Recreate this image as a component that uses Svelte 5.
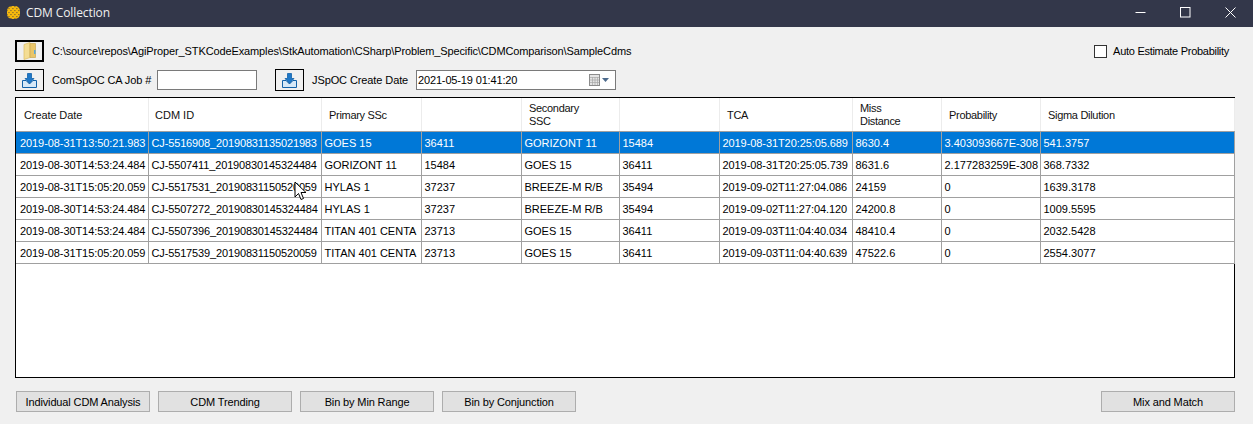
<script>
  const cols = [133, 173, 100, 100, 98, 100, 133, 89, 99, 194];
  const gridCols = cols.map((c) => c + 'px').join(' ');
  const headers = ['Create Date', 'CDM ID', 'Primary SSc', '', 'Secondary SSC', '', 'TCA', 'Miss Distance', 'Probability', 'Sigma Dilution'];
  const rows = [
    ['2019-08-31T13:50:21.983', 'CJ-5516908_20190831135021983', 'GOES 15', '36411', 'GORIZONT 11', '15484', '2019-08-31T20:25:05.689', '8630.4', '3.403093667E-308', '541.3757'],
    ['2019-08-30T14:53:24.484', 'CJ-5507411_20190830145324484', 'GORIZONT 11', '15484', 'GOES 15', '36411', '2019-08-31T20:25:05.739', '8631.6', '2.177283259E-308', '368.7332'],
    ['2019-08-31T15:05:20.059', 'CJ-5517531_20190831150520059', 'HYLAS 1', '37237', 'BREEZE-M R/B', '35494', '2019-09-02T11:27:04.086', '24159', '0', '1639.3178'],
    ['2019-08-30T14:53:24.484', 'CJ-5507272_20190830145324484', 'HYLAS 1', '37237', 'BREEZE-M R/B', '35494', '2019-09-02T11:27:04.120', '24200.8', '0', '1009.5595'],
    ['2019-08-30T14:53:24.484', 'CJ-5507396_20190830145324484', 'TITAN 401 CENTA', '23713', 'GOES 15', '36411', '2019-09-03T11:04:40.034', '48410.4', '0', '2032.5428'],
    ['2019-08-31T15:05:20.059', 'CJ-5517539_20190831150520059', 'TITAN 401 CENTA', '23713', 'GOES 15', '36411', '2019-09-03T11:04:40.639', '47522.6', '0', '2554.3077']
  ];
  const actions = ['Individual CDM Analysis', 'CDM Trending', 'Bin by Min Range', 'Bin by Conjunction'];
</script>

{#snippet download()}
  <svg width="15" height="15" viewBox="0 0 15 15">
    <path d="M.5 7.5h3.5l3.5 3.5 3.5-3.5h3.5v7h-14z" fill="#d6e8f7" stroke="#1261a8" stroke-width="1"/>
    <path d="M5.5 .5h4v5h2.5l-4.5 5-4.5-5h2.5z" fill="#1f78c8" stroke="#1261a8" stroke-width=".8"/>
  </svg>
{/snippet}

<div class="window">
  <header class="titlebar">
    <div class="title">
      <svg class="logo" width="13" height="13" viewBox="0 0 13 13">
        <defs>
          <pattern id="chk" width="2.8" height="2.8" patternUnits="userSpaceOnUse" patternTransform="rotate(45)">
            <rect width="2.8" height="2.8" fill="#f7b90c"/>
            <rect width="1" height="1" fill="#33374a"/>
          </pattern>
        </defs>
        <rect x="0" y="0" width="13" height="13" rx="5" fill="url(#chk)"/>
      </svg>
      <span>CDM Collection</span>
    </div>
    <div class="winctl">
      <svg width="11" height="11" viewBox="0 0 11 11"><path d="M.5 5.5h10" stroke="#fff" stroke-width="1"/></svg>
      <svg width="11" height="11" viewBox="0 0 11 11"><rect x=".5" y=".5" width="9.5" height="9.5" fill="none" stroke="#fff" stroke-width="1"/></svg>
      <svg width="11" height="11" viewBox="0 0 11 11"><path d="M.5 .5l10 10M10.500 .5L.5 10.500" stroke="#fff" stroke-width="1"/></svg>
    </div>
  </header>

  <main class="content">
    <div class="row first">
      <button class="icon-btn folder" aria-label="Browse">
        <svg width="14" height="18" viewBox="0 0 14 18">
          <path d="M1 2.500l6-2v15l-6 2z" fill="#f4dd94" stroke="#dcbc62" stroke-width=".7"/>
          <path d="M7 1.500h5.500v14H7z" fill="#e9c569" stroke="#c9a850" stroke-width=".7"/>
          <rect x="11" y="8" width="1.500" height="4" fill="#5aa7dc"/>
        </svg>
      </button>
      <span class="path">C:\source\repos\AgiProper_STKCodeExamples\StkAutomation\CSharp\Problem_Specific\CDMComparison\SampleCdms</span>
      <label class="auto"><span class="check"></span><span>Auto Estimate Probability</span></label>
    </div>

    <div class="row second">
      <button class="icon-btn" aria-label="Load ComSpOC">{@render download()}</button>
      <span class="lbl job">ComSpOC CA Job #</span>
      <div class="input"></div>
      <button class="icon-btn b2" aria-label="Load JSpOC">{@render download()}</button>
      <span class="lbl date">JSpOC Create Date</span>
      <div class="picker">
        <span>2021-05-19 01:41:20</span>
        <svg width="20" height="12" viewBox="0 0 20 12">
          <rect x=".5" y=".5" width="10" height="11" fill="#e4e4e4" stroke="#8c8c8c"/>
          <path d="M1 3.500h9M1 6h9M1 8.500h9M3.500 3v8M6 3v8M8.500 3v8" stroke="#a8a8a8" stroke-width=".7"/>
          <path d="M13 4h7l-3.500 4z" fill="#4c6a8c"/>
        </svg>
      </div>
    </div>

    <div class="table">
      <div class="grid head" style="grid-template-columns:{gridCols}">
        {#each headers as h}
          <div class="hcell"><span>{h}</span></div>
        {/each}
      </div>
      {#each rows as r, i}
        <div class="grid data" class:selected={i === 0} style="grid-template-columns:{gridCols}">
          {#each r as c}
            <div class="cell">{c}</div>
          {/each}
        </div>
      {/each}
      <svg class="cursor" width="13" height="20" viewBox="0 0 13 20">
        <path d="M1 1v15l3.500-3.500 2.500 6 2.500-1-2.500-6h5z" fill="#fff" stroke="#000" stroke-width="1"/>
      </svg>
    </div>

    <div class="actions">
      {#each actions as a}
        <button class="action">{a}</button>
      {/each}
      <button class="action last">Mix and Match</button>
    </div>
  </main>
</div>

<style>
  :global(body) {
    margin: 0;
    background: #f0f0f0;
  }
  .window {
    width: 1253px;
    height: 424px;
    overflow: hidden;
    background: #f0f0f0;
    font-family: "Liberation Sans", Arial, sans-serif;
    font-size: 11px;
    color: #000;
  }
  .titlebar {
    box-sizing: border-box;
    height: 27px;
    padding-bottom: 3px;
    background: #33374a;
    display: flex;
    align-items: center;
    justify-content: space-between;
    color: #fff;
  }
  .title {
    display: flex;
    align-items: center;
    padding-left: 7px;
    gap: 6px;
    font-family: "Open Sans", sans-serif;
    font-size: 12px;
    letter-spacing: -0.1px;
    color: #f0f0f0;
  }
  .winctl {
    display: flex;
    gap: 34px;
    padding-right: 17px;
  }
  .winctl svg { display: block; }
  .content {
    padding: 13px 18px 0 15px;
  }
  .row {
    display: flex;
    align-items: center;
  }
  .first { height: 22px; }
  .second {
    height: 22px;
    margin-top: 7px;
  }
  .icon-btn {
    box-sizing: border-box;
    width: 29px;
    height: 22px;
    padding: 0;
    background: #f0f0f0;
    border: 1px solid #000;
    display: flex;
    align-items: center;
    justify-content: center;
    flex: none;
  }
  .folder { border-width: 2px; }
  .path {
    margin-left: 8px;
    flex: 1;
    letter-spacing: -0.12px;
  }
  .auto {
    display: flex;
    align-items: center;
    gap: 6px;
    margin-right: 6px;
    letter-spacing: -0.28px;
  }
  .check {
    box-sizing: border-box;
    width: 13px;
    height: 13px;
    background: #fff;
    border: 1px solid #333;
  }
  .lbl { white-space: nowrap; flex: none; letter-spacing: -0.1px; }
  .job { margin-left: 8px; width: 105px; }
  .input {
    box-sizing: border-box;
    width: 100px;
    height: 20px;
    background: #fff;
    border: 1px solid #7a7a7a;
  }
  .b2 { margin-left: 18px; }
  .date { margin-left: 8px; width: 104px; }
  .picker {
    box-sizing: border-box;
    width: 200px;
    height: 20px;
    background: #fff;
    border: 1px solid #7a7a7a;
    display: flex;
    align-items: center;
    justify-content: space-between;
    padding: 0 6px 0 1px;
    letter-spacing: -0.15px;
  }
  .table {
    position: relative;
    box-sizing: border-box;
    width: 1220px;
    height: 281px;
    margin-top: 6px;
    background: #fff;
    border: 1px solid #000;
  }
  .grid {
    display: grid;
    width: 1219px;
  }
  .head {
    height: 34px;
    background: #fff;
    border-bottom: 1px solid #a0a0a0;
    box-sizing: border-box;
  }
  .hcell {
    box-sizing: border-box;
    padding: 1px 7px 0 7px;
    display: flex;
    align-items: center;
    border-right: 1px solid #ececec;
    line-height: 13px;
    color: #111;
    letter-spacing: -0.3px;
  }
  .hcell:first-child { padding-left: 8px; letter-spacing: -0.1px; }
  .hcell:nth-child(2) { padding-left: 6px; letter-spacing: 0; }
  .hcell span { display: block; max-width: 62px; }
  .hcell:first-child span, .hcell:nth-child(2) span, .hcell:nth-child(3) span, .hcell:last-child span, .hcell:nth-child(9) span { max-width: none; white-space: nowrap; }
  .data {
    height: 22px;
    box-sizing: border-box;
    background: #fff;
    border-bottom: 1px solid #a0a0a0;
  }
  .cell {
    box-sizing: border-box;
    padding-left: 2.5px;
    display: flex;
    align-items: center;
    white-space: nowrap;
    overflow: hidden;
    border-right: 1px solid #a0a0a0;
  }
  .cell:first-child { padding-left: 4px; }
  .cell:first-child, .cell:nth-child(7) { letter-spacing: -0.08px; }
  .cell:nth-child(2) { letter-spacing: -0.14px; }
  .selected {
    background: #0078d7;
    color: #fff;
  }
  .cursor {
    position: absolute;
    left: 278px;
    top: 83px;
  }
  .actions {
    display: flex;
    gap: 8px;
    margin-top: 13px;
    padding-left: 1px;
  }
  .action {
    box-sizing: border-box;
    width: 134px;
    height: 21px;
    padding: 0;
    background: #e1e1e1;
    border: 1px solid #adadad;
    font: inherit;
    letter-spacing: -0.13px;
    color: #000;
  }
  .last { margin-left: auto; }
</style>
